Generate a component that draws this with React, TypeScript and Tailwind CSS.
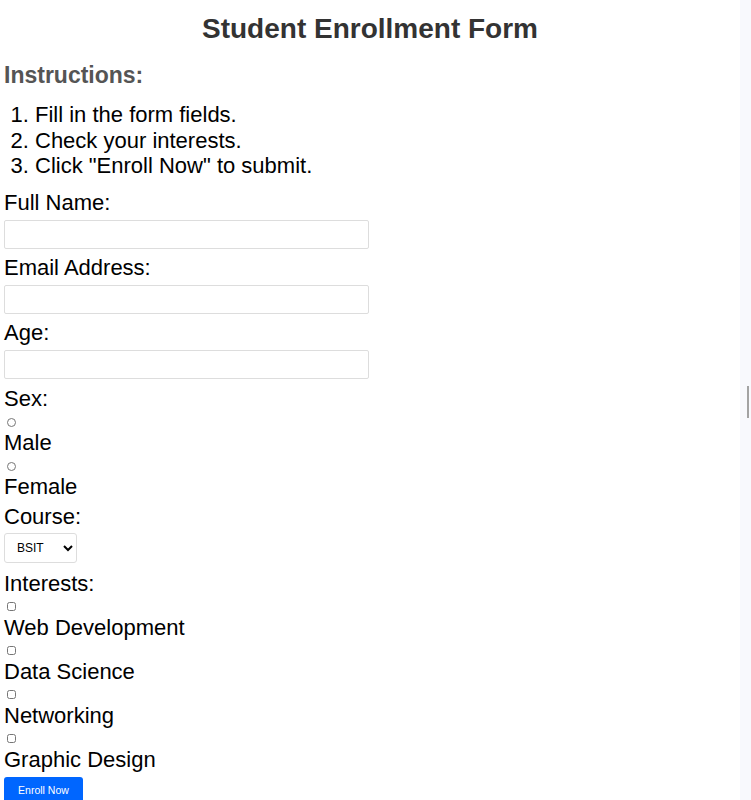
const courses = ["BSIT", "BSCS", "BSIS", "BSEMC"];
const interests = ["Web Development", "Data Science", "Networking", "Graphic Design"];

const App = () => {
  return (
    <div className="flex h-[800px] w-full overflow-hidden bg-white font-['Liberation_Sans',Arial,sans-serif] text-black">
      <div className="w-[740px] shrink-0 px-[4px]">
        <h1 className="mt-[13px] text-center text-[28px] font-bold leading-[32px] text-[#333]">
          Student Enrollment Form
        </h1>

        <h2 className="mt-[17px] text-[23px] font-bold leading-[26px] text-[#555]">Instructions:</h2>
        <ol className="mt-[14px] list-decimal pl-[31px] text-[22px] leading-[25.5px]">
          <li>Fill in the form fields.</li>
          <li>Check your interests.</li>
          <li>Click "Enroll Now" to submit.</li>
        </ol>

        <form className="mt-[11px] text-[22px] leading-[25px]" onSubmit={(e) => e.preventDefault()}>
          <label className="block">Full Name:</label>
          <input type="text" className="mt-[5px] mb-[6px] block h-[29px] w-[365px] rounded-[2px] border border-[#ddd] px-2 text-[14px]" />

          <label className="block">Email Address:</label>
          <input type="email" className="mt-[5px] mb-[6px] block h-[29px] w-[365px] rounded-[2px] border border-[#ddd] px-2 text-[14px]" />

          <label className="block">Age:</label>
          <input type="number" className="mt-[5px] mb-[7px] block h-[29px] w-[365px] rounded-[2px] border border-[#ddd] px-2 text-[14px]" />

          <label className="block">Sex:</label>
          <div className="h-[19px] pt-[7px] pl-[3px]">
            <input type="radio" name="sex" className="block h-[9px] w-[9px]" />
          </div>
          <label className="block">Male</label>
          <div className="h-[19px] pt-[7px] pl-[3px]">
            <input type="radio" name="sex" className="block h-[9px] w-[9px]" />
          </div>
          <label className="block">Female</label>

          <label className="mt-[5px] block">Course:</label>
          <select className="mt-[4px] mb-[8px] block h-[30px] w-[73px] rounded-[3px] border border-[#ddd] bg-white pl-[8px] text-[12px] leading-normal">
            {courses.map((c) => (
              <option key={c}>{c}</option>
            ))}
          </select>

          <label className="block">Interests:</label>
          {interests.map((item) => (
            <div key={item}>
              <div className="h-[19px] pt-[6px] pl-[3px]">
                <input type="checkbox" className="block h-[9px] w-[9px]" />
              </div>
              <label className="block">{item}</label>
            </div>
          ))}

          <button
            type="submit"
            className="mt-[5px] block h-[26px] w-[79px] rounded-[3px] bg-[#0066ff] text-[10.5px] leading-[24px] text-white"
          >
            Enroll Now
          </button>
        </form>
      </div>

      <div className="w-[11px] shrink-0 bg-[#f8f9fd] pt-[386px]">
        <div className="ml-[7px] h-[32px] w-[2px] bg-[#a3a3a3]" />
      </div>
    </div>
  );
};

export default App;
